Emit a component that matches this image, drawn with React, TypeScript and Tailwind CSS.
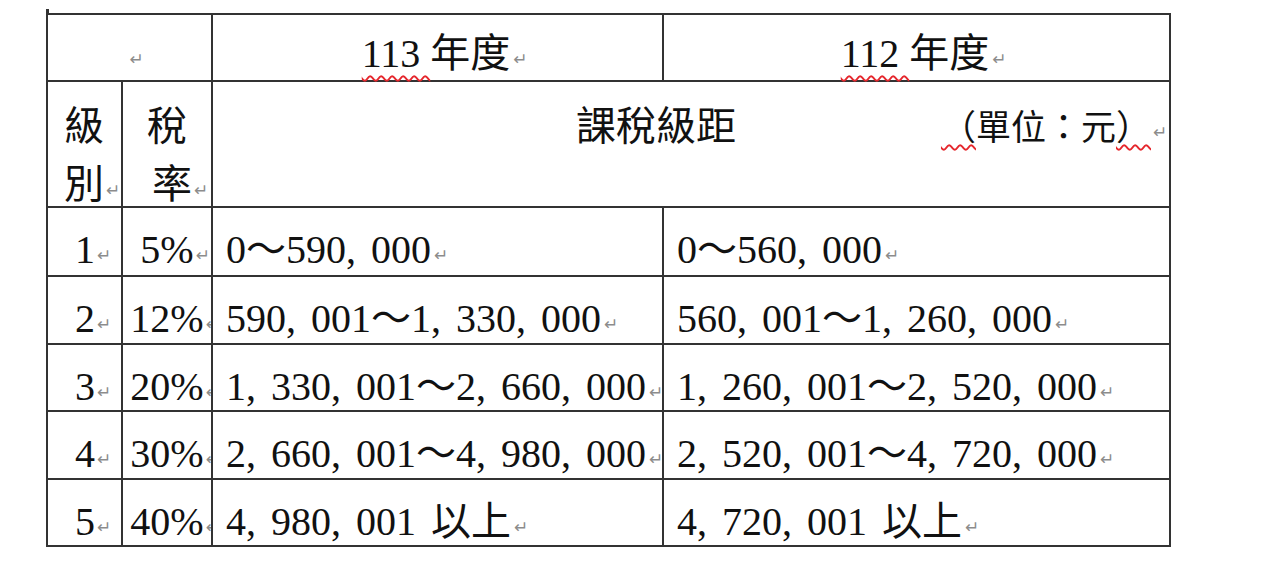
import React from 'react';

// paragraph mark as Word shows it; takes no width so centred text stays centred
function Mark({ gap = 'pl-[3px]' }: { gap?: string }) {
  return (
    <span
      className={`inline-block w-0 ${gap} align-[2px] font-['DejaVu_Sans',sans-serif] text-[17px] leading-none text-[#8c8c8c]`}
    >
      ↵
    </span>
  );
}

function Squiggle({ children, offset = 'underline-offset-[8px]' }: { children: React.ReactNode; offset?: string }) {
  return (
    <span className={`underline decoration-wavy decoration-[#e5262c] decoration-[1.5px] ${offset}`}>
      {children}
    </span>
  );
}

const rows = [
  ['1', '5%', '0～590, 000', '0～560, 000'],
  ['2', '12%', '590, 001～1, 330, 000', '560, 001～1, 260, 000'],
  ['3', '20%', '1, 330, 001～2, 660, 000', '1, 260, 001～2, 520, 000'],
  ['4', '30%', '2, 660, 001～4, 980, 000', '2, 520, 001～4, 720, 000'],
  ['5', '40%', '4, 980, 001 以上', '4, 720, 001 以上'],
];

export default function App() {
  return (
    <div className="min-h-screen bg-white font-['Liberation_Serif','Noto_Sans_CJK_TC',serif] text-[40px] text-[#111]">
      <div className="ml-[46px] pt-[9px]">
        <div className="h-[4px] w-[3px] bg-[#333]" />
        <div className="grid w-fit grid-cols-[73px_88px_449px_505px] grid-rows-[65px_124px_67px_66px_65px_66px_65px] gap-[2px] border-2 border-[#333] bg-[#333]">
          {/* year header */}
          <div className="col-span-2 bg-white pt-[16px] text-center leading-[46px]">
            <Mark gap="pl-0" />
          </div>
          <div className="bg-white pt-[16px] text-center leading-[46px] whitespace-nowrap">
            <Squiggle>113 </Squiggle>年度
            <Mark />
          </div>
          <div className="bg-white pt-[16px] text-center leading-[46px] whitespace-nowrap">
            <Squiggle>112 </Squiggle>年度
            <Mark />
          </div>

          {/* second header row */}
          <div className="bg-white pl-[16px] pt-[16px] leading-[58px]">
            <div>級</div>
            <div>
              別<Mark gap="pl-[2px]" />
            </div>
          </div>
          <div className="bg-white pt-[16px] leading-[58px]">
            <div className="pl-[24px]">稅</div>
            <div className="pl-[29px]">
              率<Mark gap="pl-[2px]" />
            </div>
          </div>
          <div className="col-span-2 flex items-baseline overflow-hidden bg-white pt-[16px] leading-[58px] whitespace-nowrap">
            <span className="pl-[363px]">課稅級距</span>
            <span className="ml-auto pr-[16px] text-[35px]">
              <Squiggle offset="underline-offset-[4px]">（</Squiggle>單位：元
              <Squiggle offset="underline-offset-[4px]">）</Squiggle>
              <Mark gap="pl-[2px]" />
            </span>
          </div>

          {/* brackets */}
          {rows.map((r) => (
            <React.Fragment key={r[0]}>
              <div className="overflow-hidden bg-white pl-[27px] pt-[19px] leading-[46px] whitespace-nowrap">
                {r[0]}
                <Mark gap="pl-[2px]" />
              </div>
              <div className="overflow-hidden bg-white pl-[2px] pt-[19px] text-center leading-[46px] whitespace-nowrap">
                {r[1]}
                <Mark gap="pl-[2px]" />
              </div>
              <div className="overflow-hidden bg-white pl-[13px] pt-[19px] leading-[46px] whitespace-nowrap [word-spacing:5px]">
                {r[2]}
                <Mark />
              </div>
              <div className="overflow-hidden bg-white pl-[13px] pt-[19px] leading-[46px] whitespace-nowrap [word-spacing:5px]">
                {r[3]}
                <Mark />
              </div>
            </React.Fragment>
          ))}
        </div>
      </div>
    </div>
  );
}
